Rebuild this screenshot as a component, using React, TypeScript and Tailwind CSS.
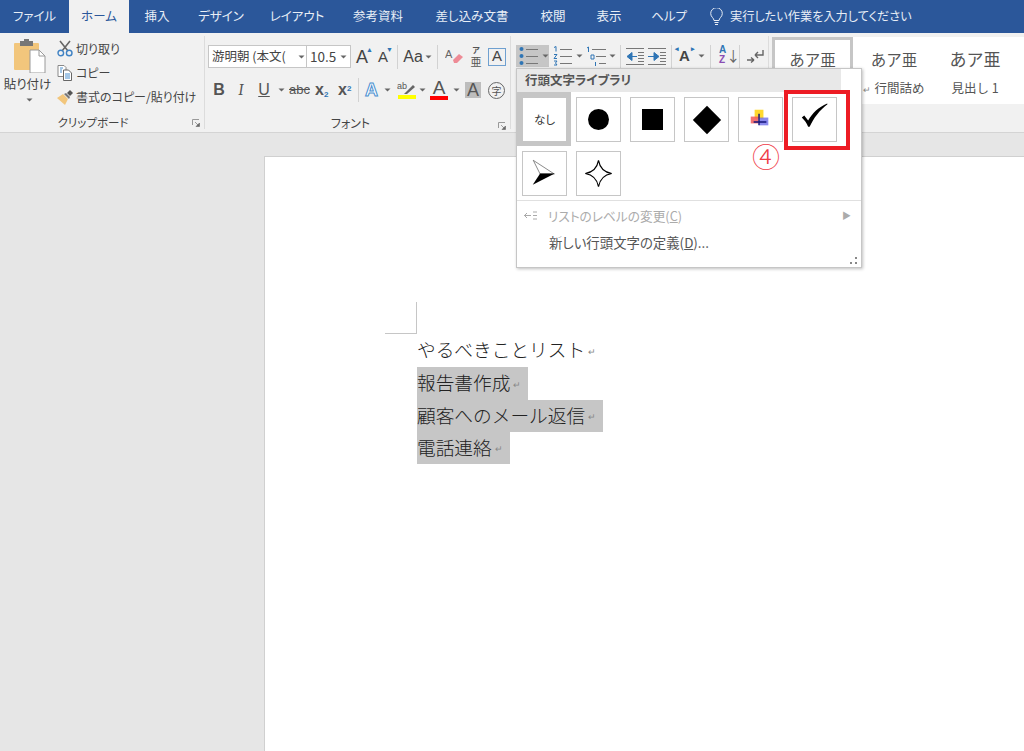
import type { ReactNode } from "react";

const tabs = [
  { label: "ファイル", w: "w-[69px]" },
  { label: "ホーム", w: "w-[60px]", active: true },
  { label: "挿入", w: "w-[56px]" },
  { label: "デザイン", w: "w-[72px]" },
  { label: "レイアウト", w: "w-[80px]" },
  { label: "参考資料", w: "w-[82px]" },
  { label: "差し込み文書", w: "w-[106px]" },
  { label: "校閲", w: "w-[56px]" },
  { label: "表示", w: "w-[56px]" },
  { label: "ヘルプ", w: "w-[64px]" },
];

function Caret({ className = "" }: { className?: string }) {
  return (
    <svg width="7" height="4" viewBox="0 0 7 4" className={className}>
      <path d="M0.5 0.5h6L3.5 3.5z" fill="#666" />
    </svg>
  );
}

function Sep() {
  return <div className="w-px h-[24px] bg-[#d2d2d2] shrink-0" />;
}

function Launcher({ className = "" }: { className?: string }) {
  return (
    <svg width="8" height="8" viewBox="0 0 8 8" className={className}>
      <path d="M0.5 6V0.5H7" fill="none" stroke="#999" />
      <path d="M3 3l3.5 3.5M7.5 4v3.5H4z" fill="#666" stroke="#666" strokeWidth="0.6" />
    </svg>
  );
}

function PasteIcon() {
  return (
    <svg width="32" height="34" viewBox="0 0 32 34">
      <rect x="0" y="4" width="25" height="27" rx="1" fill="#f2c67c" />
      <rect x="6" y="2" width="13" height="5" fill="#777" />
      <rect x="10" y="0" width="5" height="4" fill="#777" />
      <path d="M16 11h9l6 6v17H16z" fill="#fff" stroke="#9a9a9a" />
      <path d="M25 11v6h6" fill="none" stroke="#9a9a9a" />
    </svg>
  );
}

function ScissorsIcon() {
  return (
    <svg width="16" height="17" viewBox="0 0 16 17">
      <path d="M3 1l8 10M13 1L5 11" stroke="#666" strokeWidth="1.6" fill="none" />
      <circle cx="3.8" cy="13" r="2.8" fill="none" stroke="#3f82c4" strokeWidth="1.4" />
      <circle cx="12.2" cy="13" r="2.8" fill="none" stroke="#3f82c4" strokeWidth="1.4" />
    </svg>
  );
}

function CopyIcon() {
  return (
    <svg width="16" height="16" viewBox="0 0 16 16">
      <path d="M1 .5h6l2 2v9H1z" fill="#fff" stroke="#888" />
      <path d="M6.500 5h5l3 3v7.500h-8z" fill="#fff" stroke="#666" />
      <path d="M8 9h5M8 11h5M8 13h5M3 3h3M3 5h2M3 7h2" stroke="#4a90d0" />
    </svg>
  );
}

function BrushIcon() {
  return (
    <svg width="16" height="15" viewBox="0 0 16 15">
      <path d="M0 8l6-4 5 5-3 6z" fill="#f2c67c" />
      <path d="M7 4l5 5 1-2-4-4z" fill="#777" />
      <path d="M10 3l3-3 3 3-3 3z" fill="#555" />
    </svg>
  );
}

function Lines({ x, ys, w, color = "#777" }: { x: number; ys: number[]; w: number; color?: string }) {
  return (
    <>
      {ys.map((y) => (
        <path key={y} d={`M${x} ${y}h${w}`} stroke={color} strokeWidth="1" />
      ))}
    </>
  );
}

function BulletIcon() {
  return (
    <svg width="19" height="20" viewBox="0 0 19 20">
      {[3, 10, 17].map((y) => (
        <circle key={y} cx="2.500" cy={y} r="2" fill="#2f75b5" />
      ))}
      <Lines x={7} ys={[3.5, 10.5, 17.5]} w={12} />
    </svg>
  );
}

function NumberIcon() {
  return (
    <svg width="19" height="20" viewBox="0 0 19 20">
      <Lines x={7} ys={[3.5, 10.5, 17.5]} w={12} />
      <path d="M1 1.500l2-1v5M1 8.500h3l-3 4h3M1 15h3l-1.500 2L4 19H1" fill="none" stroke="#2f75b5" strokeWidth="1" />
    </svg>
  );
}

function MultiLevelIcon() {
  return (
    <svg width="20" height="20" viewBox="0 0 20 20">
      <path d="M1 2l1.500-1v5" fill="none" stroke="#2f75b5" />
      <path d="M5 9h3v4H5z" fill="none" stroke="#2f75b5" />
      <path d="M9.500 16v4" stroke="#2f75b5" />
      <Lines x={6} ys={[3.5]} w={14} />
      <Lines x={10} ys={[10.5]} w={10} />
      <Lines x={13} ys={[17.5]} w={7} />
    </svg>
  );
}

function IndentIcon({ flip = false }: { flip?: boolean }) {
  return (
    <svg width="18" height="17" viewBox="0 0 18 17">
      <Lines x={0} ys={[0.5, 16.5]} w={18} />
      {flip ? (
        <>
          <path d="M0 8.500h6M6 4.500v8l5-4z" fill="#2f75b5" stroke="#2f75b5" />
          <Lines x={12} ys={[4.5, 7.5, 10.5, 13.5]} w={6} />
        </>
      ) : (
        <>
          <path d="M11 8.500h-5M6 4.500v8l-5-4z" fill="#2f75b5" stroke="#2f75b5" />
          <Lines x={12} ys={[4.5, 7.5, 10.5, 13.5]} w={6} />
        </>
      )}
    </svg>
  );
}

function ReturnIcon() {
  return (
    <svg width="17" height="15" viewBox="0 0 17 15">
      <path d="M16 1v5H8M8 6l3-3M8 6l3 3" fill="none" stroke="#666" strokeWidth="1.4" />
      <path d="M0 11h7M7 11l-3-2.500M7 11l-3 2.500" fill="none" stroke="#666" strokeWidth="1.4" />
    </svg>
  );
}

function RetMark() {
  return <span className="ml-[3px] mt-[3px] text-[9px] leading-none text-[#888]">↵</span>;
}

function Cell({ children }: { children: ReactNode }) {
  return (
    <div className="w-[45px] h-[45px] shrink-0 border border-[#c6c6c6] bg-white flex items-center justify-center">
      {children}
    </div>
  );
}

function Bullets() {
  return (
    <>
      <Cell>
        <div className="w-[21px] h-[21px] rounded-full bg-black" />
      </Cell>
      <Cell>
        <div className="w-[21px] h-[21px] bg-black" />
      </Cell>
      <Cell>
        <div className="w-[20px] h-[20px] bg-black rotate-45" />
      </Cell>
      <Cell>
        <svg width="43" height="43" viewBox="0 0 44 44">
          <defs>
            <filter id="soft" x="-30%" y="-30%" width="160%" height="160%">
              <feGaussianBlur stdDeviation="0.8" />
            </filter>
          </defs>
          <rect x="16" y="12" width="9" height="9" fill="#ffd92e" filter="url(#soft)" />
          <rect x="12" y="19" width="8" height="7" fill="#f25a5a" opacity="0.85" filter="url(#soft)" />
          <rect x="21" y="20" width="9" height="8" fill="#5a5ae8" opacity="0.7" filter="url(#soft)" />
          <path d="M20.500 16v12M15 24.500h13" stroke="#15157a" strokeWidth="1.5" />
        </svg>
      </Cell>
      <Cell>
        <svg width="43" height="43" viewBox="0 0 44 44">
          <path
            d="M9 20L11.500 18L15.500 23C20 15 26 9.500 35 5.500L35.300 6.300C27.500 12 21 20.500 17 29.500H15.500C14 25.500 11.500 22.500 9 20Z"
            fill="#000"
          />
        </svg>
      </Cell>
      <Cell>
        <svg width="43" height="43" viewBox="0 0 44 44">
          <path d="M10.500 8.500L32 22.500H17.500z" fill="#fff" stroke="#555" strokeWidth="0.7" />
          <path d="M10 33.500L17.500 22H32.500z" fill="#000" />
        </svg>
      </Cell>
      <Cell>
        <svg width="43" height="43" viewBox="0 0 44 44">
          <path d="M22 8.500Q24 20 35.500 22Q24 24 22 35.500Q20 24 8.500 22Q20 20 22 8.500Z" fill="#fff" stroke="#000" strokeWidth="1.2" />
        </svg>
      </Cell>
    </>
  );
}

export default function App() {
  return (
    <div className="w-[1024px] h-[751px] overflow-hidden relative flex flex-col bg-[#e6e6e6] text-[#444] font-['Noto_Sans_CJK_JP',sans-serif] [font-feature-settings:'palt']">
      {/* tabs */}
      <div className="h-[33px] bg-[#2b579a] flex text-[12.5px] text-[#e8eef6] shrink-0">
        {tabs.map((t) => (
          <div
            key={t.label}
            className={`${t.w} flex items-center justify-center ${t.active ? "bg-[#f1f1f1] text-[#2b579a]" : ""}`}
          >
            {t.label}
          </div>
        ))}
        <div className="flex items-center ml-[9px] gap-[7px] text-[12.2px]">
          <svg width="13" height="18" viewBox="0 0 13 18" fill="none" stroke="#e8eef6" strokeWidth="1">
            <path d="M4 12.500C4 10 .7 9 .7 5.500a5.800 5.800 0 0 1 11.600 0C12.300 9 9 10 9 12.500z" />
            <path d="M4.500 14.500h4M5 16.500h3" />
          </svg>
          <span>実行したい作業を入力してください</span>
        </div>
      </div>

      {/* ribbon */}
      <div className="h-[100px] bg-[#f1f1f1] border-b border-[#d4d4d4] flex shrink-0 text-[12px]">
        {/* clipboard */}
        <div className="w-[205px] border-r border-[#dcdcdc] my-[3px] flex flex-col shrink-0">
          <div className="flex flex-1">
            <div className="w-[55px] flex flex-col items-center pt-[3px]">
              <div className="ml-[5px]">
                <PasteIcon />
              </div>
              <span className="mt-[2px] leading-[18px] text-[12.5px]">貼り付け</span>
              <Caret className="mt-[5px] ml-[3px]" />
            </div>
            <div className="flex flex-col pl-[2px]">
              <div className="h-[25px] flex items-center gap-[3px]">
                <ScissorsIcon />
                切り取り
              </div>
              <div className="h-[24px] flex items-center gap-[3px]">
                <CopyIcon />
                コピー
              </div>
              <div className="h-[24px] flex items-center gap-[3px]">
                <BrushIcon />
                書式のコピー/貼り付け
              </div>
            </div>
          </div>
          <div className="h-[18px] -mb-[3px] flex items-center justify-center relative pr-[18px] text-[11.5px]">
            クリップボード
            <Launcher className="absolute right-[4px] top-[5px]" />
          </div>
        </div>

        {/* font */}
        <div className="w-[306px] border-r border-[#dcdcdc] my-[3px] flex flex-col shrink-0 relative">
          <div className="flex items-center pl-[3px] pt-[9px] h-[32px]">
            <div className="w-[99px] h-[23px] bg-white border border-[#c6c6c6] flex items-center pl-[3px] text-[12.5px] [font-feature-settings:normal]">
              <span className="w-[84px] whitespace-nowrap">游明朝 (本文(</span>
              <Caret className="ml-[2px]" />
            </div>
            <div className="w-[44px] h-[23px] bg-white border border-l-0 border-[#c6c6c6] flex items-center pl-[3px] text-[13.5px]">
              <span className="w-[28px]">10.5</span>
              <Caret className="ml-[2px]" />
            </div>
            <div className="w-[22px] text-center text-[18px] leading-none font-['Liberation_Sans',sans-serif] relative">
              A
              <span className="absolute right-0 top-[-2px] text-[7px] text-[#2f75b5]">▲</span>
            </div>
            <div className="w-[20px] text-center text-[15px] leading-none font-['Liberation_Sans',sans-serif] relative">
              A
              <span className="absolute right-0 top-[-3px] text-[7px] text-[#2f75b5]">▼</span>
            </div>
            <div className="ml-[4px]">
              <Sep />
            </div>
            <div className="w-[39px] flex items-center justify-center gap-[2px] text-[16px] font-['Liberation_Sans',sans-serif]">
              Aa
              <Caret />
            </div>
            <Sep />
            <div className="w-[31px] flex justify-center">
              <svg width="18" height="18" viewBox="0 0 18 18">
                <path d="M8 12l6-6 4 3-6 6h-3z" fill="#ee8b96" />
                <text x="0" y="10" fontSize="11" fill="#666" fontFamily="Liberation Sans">A</text>
              </svg>
            </div>
            <div className="w-[14px] flex flex-col items-center text-[#555]">
              <span className="text-[8px] font-bold leading-[10px]">ア</span>
              <span className="text-[11px] leading-[13px]">亜</span>
            </div>
            <div className="ml-[5px] w-[18px] h-[18px] border border-[#6fa0d0] flex items-center justify-center text-[15px] font-['Liberation_Sans',sans-serif] text-[#444]">
              A
            </div>
          </div>
          <div className="flex items-center h-[24px] mt-[10px] pl-[8px] font-['Liberation_Sans',sans-serif] text-[#555]">
            <span className="w-[12px] text-center text-[16px] font-bold">B</span>
            <span className="w-[12px] ml-[10px] text-center text-[16px] italic font-serif">I</span>
            <span className="w-[14px] ml-[10px] text-center text-[16px] underline">U</span>
            <Caret className="ml-[7px]" />
            <span className="w-[19px] ml-[4px] text-[13px] line-through">abc</span>
            <span className="w-[18px] ml-[7px] text-[16px] font-bold">
              x<sub className="text-[8px] text-[#2f75b5]">2</sub>
            </span>
            <span className="w-[18px] ml-[5px] text-[16px] font-bold">
              x<sup className="text-[8px] text-[#2f75b5]">2</sup>
            </span>
            <div className="ml-[2px]">
              <Sep />
            </div>
            <span className="w-[16px] ml-[6px] text-[18px] font-bold text-white [-webkit-text-stroke:1px_#4a8fd0] leading-none">A</span>
            <Caret className="ml-[3px]" />
            <div className="w-[19px] ml-[6px] flex flex-col items-center">
              <svg width="19" height="14" viewBox="0 0 19 14">
                <text x="0" y="8" fontSize="9" fill="#555" fontFamily="Liberation Sans">ab</text>
                <path d="M7 13l9-9 2 2-8 7z" fill="#666" />
              </svg>
              <div className="w-[18px] h-[4px] bg-[#ffff00]" />
            </div>
            <Caret className="ml-[3px]" />
            <div className="w-[18px] ml-[4px] flex flex-col items-center leading-none">
              <span className="text-[19px] leading-[16px]">A</span>
              <div className="w-[18px] h-[4px] bg-[#ff0000]" />
            </div>
            <Caret className="ml-[5px]" />
            <div className="w-[16px] h-[16px] ml-[5px] bg-[#bdbdbd] flex items-center justify-center text-[18px]">A</div>
            <div className="w-[17px] h-[17px] ml-[7px] rounded-full border border-[#666] flex items-center justify-center text-[10px] font-['Noto_Sans_CJK_JP',sans-serif]">
              字
            </div>
          </div>
          <div className="mt-auto h-[18px] -mb-[3px] text-[12px] flex items-center justify-center pr-[14px]">フォント</div>
          <Launcher className="absolute right-[4px] -bottom-[1px]" />
        </div>

        {/* paragraph: the menu covers its lower half */}
        <div className="w-[258px] border-r border-[#dcdcdc] my-[3px] shrink-0 flex items-start pt-[9px] pl-[5px]">
          <div className="w-[33px] h-[22px] bg-[#c6c6c6] flex items-center pl-[3px] gap-[4px]">
            <BulletIcon />
            <Caret />
          </div>
          <div className="w-[33px] h-[22px] ml-[4px] flex items-center gap-[4px]">
            <NumberIcon />
            <Caret />
          </div>
          <div className="w-[33px] h-[22px] flex items-center gap-[3px]">
            <MultiLevelIcon />
            <Caret />
          </div>
          <div className="ml-[1px]">
            <Sep />
          </div>
          <div className="ml-[5px] h-[22px] flex items-center">
            <IndentIcon />
          </div>
          <div className="ml-[4px] h-[22px] flex items-center">
            <IndentIcon flip />
          </div>
          <div className="ml-[5px]">
            <Sep />
          </div>
          <div className="ml-[3px] w-[30px] h-[22px] flex items-center gap-[2px] text-[15px] font-bold font-['Liberation_Sans',sans-serif]">
            <span className="relative ml-[4px]">
              A
              <span className="absolute -left-[4px] -top-[1px] text-[7px] text-[#2f75b5]">◂</span>
              <span className="absolute -right-[5px] -top-[1px] text-[7px] text-[#2f75b5]">▸</span>
            </span>
            <Caret className="ml-[6px]" />
          </div>
          <div className="ml-[5px]">
            <Sep />
          </div>
          <div className="ml-[8px] w-[17px] flex items-center">
            <div className="flex flex-col text-[10px] leading-[10px] font-bold font-['Liberation_Sans',sans-serif]">
              <span className="text-[#2f75b5]">A</span>
              <span className="text-[#8a4db3]">Z</span>
            </div>
            <span className="text-[14px] leading-none text-[#666]">↓</span>
          </div>
          <div className="ml-[3px]">
            <Sep />
          </div>
          <div className="ml-[7px] h-[22px] flex items-center">
            <ReturnIcon />
          </div>
        </div>

        {/* styles */}
        <div className="flex-1 pl-[3px] pt-[4px]">
          <div className="h-[67px] bg-white flex text-[#555] [font-feature-settings:normal]">
            <div className="w-[81px] border-[3px] border-[#c6c6c6] flex justify-center pt-[8px] text-[15.500px] leading-[22px]">
              あア亜
            </div>
            <div className="w-[82px] flex flex-col items-center pt-[11px]">
              <span className="text-[15.500px] leading-[22px]">あア亜</span>
              <span className="mt-[9px] leading-[18px] text-[12.5px]">
                <span className="text-[9px] text-[#888] mr-[3px]">↵</span>行間詰め
              </span>
            </div>
            <div className="w-[80px] flex flex-col items-center pt-[11px]">
              <span className="text-[17px] leading-[22px]">あア亜</span>
              <span className="mt-[9px] leading-[18px] text-[12.5px]">見出し 1</span>
            </div>
          </div>
        </div>
      </div>

      {/* document */}
      <div className="flex-1 pl-[264px] pt-[23px] min-h-0">
        <div className="h-full bg-white border-l border-t border-[#d0d0d0] pl-[152px] pt-[145px] text-[18.700px] text-[#222] font-light [font-feature-settings:normal]">
          <div className="w-[32px] h-[32px] -ml-[32px] border-r border-b border-[#c6c6c6]" />
          <div className="flex flex-col items-start">
            <div className="h-[33px] flex items-center pb-[2px]">
              やるべきことリスト
              <RetMark />
            </div>
            <div className="h-[33px] flex items-center pb-[2px] bg-[#c6c6c6] pr-[7px]">
              報告書作成
              <RetMark />
            </div>
            <div className="h-[32px] flex items-center pb-[2px] bg-[#c6c6c6] pr-[7px]">
              顧客へのメール返信
              <RetMark />
            </div>
            <div className="h-[32px] flex items-center pb-[2px] bg-[#c6c6c6] pr-[7px]">
              電話連絡
              <RetMark />
            </div>
          </div>
        </div>
      </div>

      {/* bullet menu */}
      <div className="absolute left-[516px] top-[68px] w-[346px] h-[200px] bg-white border border-[#c6c6c6] shadow-[1px_1px_3px_rgba(0,0,0,0.25)]">
        <div className="w-[324px] h-[23px] bg-[#e8e8e8] pl-[8px] flex items-center text-[12.5px] font-bold text-[#555]">
          行頭文字ライブラリ
        </div>
        <div className="flex flex-wrap gap-[9px] pl-[5px] pt-[5px] relative">
          <div className="absolute left-0 top-0 w-[54px] h-[54px] border-[5px] border-[#c6c6c6]" />
          <Cell>
            <span className="text-[11.5px] text-[#333]">なし</span>
          </Cell>
          <Bullets />
          <div className="w-[45px]" />
        </div>
        <div className="mt-[4px] border-t border-[#e0e0e0] relative h-[67px] text-[13px]">
          <div className="h-[29px] flex items-center pl-[7px] text-[#ababab]">
            <svg width="13" height="9" viewBox="0 0 13 9" className="mr-[11px]">
              <path d="M0 4.500h7M3 2L0.500 4.500 3 7M9 1h4M9 4.500h4M9 8h4" stroke="#aaa" fill="none" />
            </svg>
            <span className="text-[12.7px]">
              リストのレベルの変更(<span className="underline">C</span>)
            </span>
            <span className="ml-auto mr-[10px] text-[9px]">▶</span>
          </div>
          <div className="h-[24px] flex items-center pl-[32px] text-[#555]">
            <span className="text-[13.4px]">
              新しい行頭文字の定義(<span className="underline">D</span>)...
            </span>
          </div>
          <svg width="7" height="7" viewBox="0 0 7 7" className="absolute right-[4px] bottom-[3px]" fill="#888">
            <rect x="5" y="0" width="2" height="2" />
            <rect x="0" y="5" width="2" height="2" />
            <rect x="5" y="5" width="2" height="2" />
          </svg>
        </div>
      </div>

      {/* annotation */}
      <div className="absolute left-[784px] top-[90px] w-[66px] h-[60px] border-[4px] border-[#ed1c24]" />
      <div className="absolute left-[748px] top-[139px] w-[36px] h-[34px] flex items-center justify-center text-[28px] leading-none font-light text-[#ef3a45] [font-feature-settings:normal]">
        ④
      </div>
    </div>
  );
}
